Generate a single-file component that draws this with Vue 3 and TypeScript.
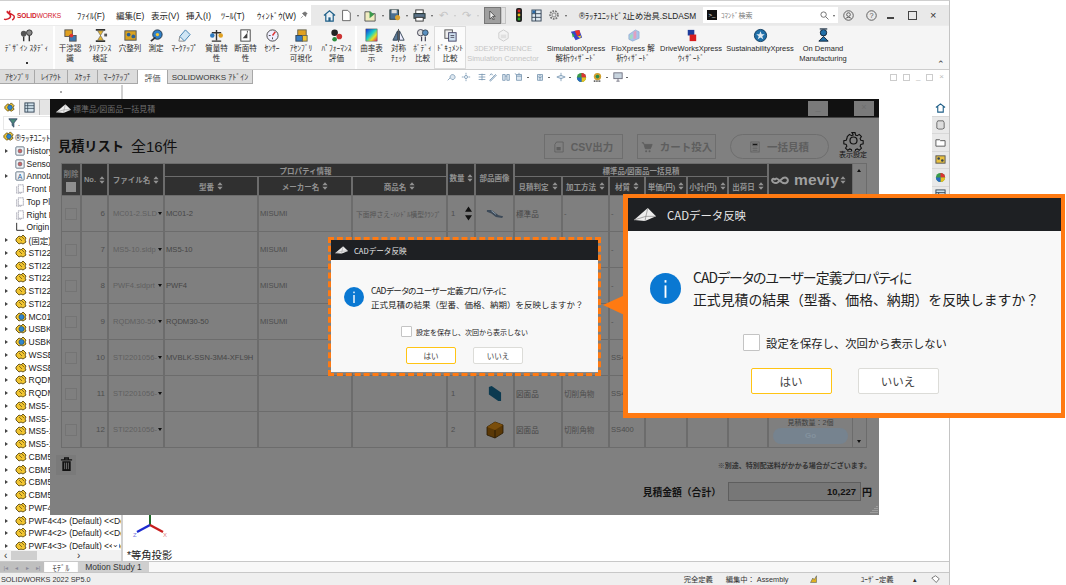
<script setup lang="ts">
interface RibbonItem { w: number; l: string[]; i: string; dim?: boolean; boxed?: boolean; sep?: boolean }

const ico: Record<string, string> = {
  study: '<circle cx="5" cy="6" r="3" fill="#555"/><circle cx="11" cy="5" r="3" fill="#888" stroke="#333"/><path d="M5 9v5M11 8v6" stroke="#333" stroke-width="1.5"/>',
  inter: '<rect x="2" y="2" width="8" height="7" fill="#e0a020" stroke="#555"/><rect x="7" y="8" width="7" height="6" fill="#3c78b4" stroke="#555"/><circle cx="9" cy="8" r="2" fill="#d33"/>',
  clear: '<path d="M3 2h10M3 14h10" stroke="#333" stroke-width="2"/><path d="M5 3h6L8 8l3 5H5l3-5z" fill="#e8b830" stroke="#555" stroke-width=".6"/><rect x="12" y="6" width="3" height="3" fill="#555"/>',
  hole: '<rect x="2" y="3" width="12" height="10" fill="#d9a21e" stroke="#555"/><circle cx="6" cy="7" r="2" fill="#2b5f96"/><circle cx="11" cy="9" r="2" fill="#2b5f96"/>',
  meas: '<circle cx="9" cy="7" r="5" fill="#2f80c8" stroke="#234"/><circle cx="9" cy="7" r="1.8" fill="#f2c531"/><path d="M2 14l5-4" stroke="#333" stroke-width="2"/>',
  mark: '<path d="M3 9l6-7 5 5-6 7z" fill="#cfe6f5" stroke="#3d7fb0"/><path d="M3 9l-1 5 6 0" fill="none" stroke="#888"/>',
  mass: '<path d="M8 2v11M3 14h10M3 5h10" stroke="#333" stroke-width="1.5"/><circle cx="3.5" cy="8" r="2.4" fill="#2d7ac0"/><circle cx="12.5" cy="8" r="2.4" fill="#e0a020"/>',
  sect: '<rect x="3" y="2" width="10" height="12" fill="#fff" stroke="#444"/><path d="M5 11l5-6v6z" fill="#444"/><path d="M10 5v-2" stroke="#444"/>',
  sens: '<circle cx="8" cy="8" r="6" fill="#eef" stroke="#444"/><path d="M8 8l3-4" stroke="#d33" stroke-width="1.5"/><path d="M4 8h2M8 12v-2" stroke="#444"/>',
  asmv: '<rect x="4" y="2" width="9" height="7" fill="#e0a020" stroke="#665"/><rect x="2" y="8" width="7" height="6" fill="#3a7cc0" stroke="#345"/><rect x="9" y="8" width="5" height="6" fill="#f2c531" stroke="#665"/>',
  perf: '<circle cx="6" cy="5" r="3.5" fill="#222"/><circle cx="11" cy="9" r="3" fill="#c33"/><circle cx="6" cy="12" r="2.5" fill="#2a8a3c"/>',
  curv: '<defs><linearGradient id="cg" x1="0" y1="0" x2="1" y2="1"><stop offset="0" stop-color="#1c2be0"/><stop offset=".45" stop-color="#18d0c8"/><stop offset=".7" stop-color="#e8e020"/><stop offset="1" stop-color="#e01c70"/></linearGradient></defs><rect x="2" y="1" width="12" height="13" fill="url(#cg)" stroke="#444" stroke-width=".5"/>',
  symm: '<path d="M8 1v14" stroke="#555"/><path d="M7 3L2 13h5z" fill="#5a7a98" stroke="#345"/><path d="M9 3l5 10H9z" fill="#eef" stroke="#345"/>',
  body: '<circle cx="6" cy="5" r="3.4" fill="#ddd" stroke="#445"/><circle cx="11" cy="5" r="3" fill="#5a90c0" stroke="#345"/><path d="M7 9v5M11 9v5" stroke="#445" stroke-width="1.3"/>',
  doc: '<rect x="2" y="2" width="8" height="9" fill="#eee" stroke="#555"/><rect x="6" y="5" width="8" height="9" fill="#cfe0ef" stroke="#446"/><path d="M8 8h4M8 10h4" stroke="#556"/>',
  exp: '<path d="M3 5l5-3 5 3v6l-5 3-5-3z" fill="#f3f3f3" stroke="#ccc"/><path d="M5 7h6v4H5z" fill="#e0e0e0"/>',
  simx: '<path d="M2 4l5 9 7-3-3-8z" fill="#3a44c8"/><path d="M6 3l3 6 3-3-1-4z" fill="#e8302c"/><path d="M3 5l3 3-2 2z" fill="#28b048"/><path d="M9 9l4-1-1 3z" fill="#f0d020"/>',
  flo: '<path d="M3 7l7-5 4 2v7l-7 3-4-2z" fill="#a8c4ea" stroke="#7a98c0" stroke-width=".5"/><path d="M8 4l3-1v8l-3 1z" fill="#e0a0c0"/><path d="M4 8l3-2v5l-3 1z" fill="#a0dcc0"/>',
  drive: '<rect x="4" y="2" width="7" height="6" fill="#1e3e9c"/><rect x="6" y="7" width="7" height="7" fill="#d81e1e"/>',
  sus: '<circle cx="8" cy="8" r="6.5" fill="#1f6fa8" stroke="#103c60"/><path d="M8 3.5l1.3 3.2h3.2L9.9 8.8l1 3.2L8 10.2 5.1 12l1-3.2L3.5 6.7h3.2z" fill="#dfeaf2"/>',
  ond: '<circle cx="8" cy="5" r="3.4" fill="#1f6fa8" stroke="#123"/><path d="M3 14l5-5 5 5z" fill="#1f6fa8" stroke="#123"/><path d="M4 1h8" stroke="#456" stroke-width="1.6"/>'
}

const ribbon: RibbonItem[] = [
  { w: 55, l: ['ﾃﾞｻﾞｲﾝ ｽﾀﾃﾞｨ'], i: 'study', sep: true },
  { w: 30, l: ['干渉認', '識'], i: 'inter' },
  { w: 30, l: ['ｸﾘｱﾗﾝｽ', '検証'], i: 'clear' },
  { w: 30, l: ['穴整列'], i: 'hole' },
  { w: 22, l: ['測定'], i: 'meas' },
  { w: 35, l: ['ﾏｰｸｱｯﾌﾟ'], i: 'mark' },
  { w: 29, l: ['質量特', '性'], i: 'mass' },
  { w: 29, l: ['断面特', '性'], i: 'sect' },
  { w: 24, l: ['ｾﾝｻｰ'], i: 'sens' },
  { w: 34, l: ['ｱｾﾝﾌﾞﾘ', '可視化'], i: 'asmv' },
  { w: 39, l: ['ﾊﾟﾌｫｰﾏﾝｽ', '評価'], i: 'perf', sep: true },
  { w: 29, l: ['曲率表', '示'], i: 'curv' },
  { w: 25, l: ['対称', 'ﾁｪｯｸ'], i: 'symm' },
  { w: 23, l: ['ﾎﾞﾃﾞｨ', '比較'], i: 'body' },
  { w: 32, l: ['ﾄﾞｷｭﾒﾝﾄ', '比較'], i: 'doc', boxed: true },
  { w: 74, l: ['3DEXPERIENCE', 'Simulation Connector'], i: 'exp', dim: true },
  { w: 72, l: ['SimulationXpress', '解析ｳｨｻﾞｰﾄﾞ'], i: 'simx' },
  { w: 42, l: ['FloXpress 解', '析ｳｨｻﾞｰﾄﾞ'], i: 'flo' },
  { w: 74, l: ['DriveWorksXpress', 'ｳｨｻﾞｰﾄﾞ'], i: 'drive' },
  { w: 64, l: ['SustainabilityXpress'], i: 'sus' },
  { w: 62, l: ['On Demand', 'Manufacturing'], i: 'ond' }
]

const menus = ['ﾌｧｲﾙ(F)', '編集(E)', '表示(V)', '挿入(I)', 'ﾂｰﾙ(T)', 'ｳｨﾝﾄﾞｳ(W)']
const cmdTabs = [
  { t: 'ｱｾﾝﾌﾞﾘ', w: 35 }, { t: 'ﾚｲｱｳﾄ', w: 33 }, { t: 'ｽｹｯﾁ', w: 30 }, { t: 'ﾏｰｸｱｯﾌﾟ', w: 40 },
  { t: '評価', w: 30, on: true }, { t: 'SOLIDWORKS ｱﾄﾞｲﾝ', w: 85 }
]

const tree: { t: string; k: string; arrow?: boolean }[] = [
  { t: 'History', k: 'hist', arrow: true }, { t: 'Sensors', k: 'sens', }, { t: 'Annotations', k: 'ann', arrow: true },
  { t: 'Front Plane', k: 'plane' }, { t: 'Top Plane', k: 'plane' }, { t: 'Right Plane', k: 'plane' }, { t: 'Origin', k: 'orig' },
  { t: '(固定) STI', k: 'y', arrow: true },
  ...['STI2201056', 'STI2201056', 'STI2201056', 'STI2201056', 'STI2201056'].map(t => ({ t, k: 'y', arrow: true })),
  { t: 'MC01-2<1>', k: 'b', arrow: true }, { t: 'USBKS<1>', k: 'b', arrow: true }, { t: 'USBKS<2>', k: 'b', arrow: true },
  ...['WSSB-1', 'WSSB-2', 'RQDM30', 'RQDM30', 'MS5-10', 'MS5-10', 'MS5-10', 'MS5-10', 'CBM5-1', 'CBM5-2', 'CBM5-3', 'CBM5-4', 'PWF4<1>']
    .map(t => ({ t, k: 'y', arrow: true })),
  { t: 'PWF4<4> (Default) <<Default', k: 'y', arrow: true },
  { t: 'PWF4<2> (Default) <<Default', k: 'y', arrow: true },
  { t: 'PWF4<3> (Default) <<Default', k: 'y', arrow: true }
]

/* heads-up view toolbar: small grey-blue line glyphs, with gaps taken from the reference */
const viewIcons: { d: string; gap: number; dot?: boolean }[] = [
  { d: 'M2 10l3-3M5 7a3 3 0 1 1 2 2z', gap: 0 },
  { d: 'M6 1v2M6 9v2M1 6h2M9 6h2M6 4a2 2 0 1 0 .01 0z', gap: 5 },
  { d: 'M2 3h8M2 6h8M2 9h8M6 2v8', gap: 6 },
  { d: 'M2 10l7-7 1 1-7 7zM2 4l2-2 2 2', gap: 1 },
  { d: 'M2 3h3v7H2zM7 3h3v7H7zM5 5h2', gap: 3 },
  { d: 'M3 3h6v7H3zM3 5l6 0M1 2l2 1M6 3V1', gap: 3, dot: true },
  { d: 'M3 3h6v7H3zM6 3v7M3 5l3 2 3-2', gap: 6, dot: true },
  { d: 'M1 6l5-2 5 2-5 2zM6 4V1M6 8v3', gap: 6, dot: true }
]

interface Row { no: number; file: string; part: string; maker: string; name: string; qty: string; pic: string; kind: string; method: string; mat: string }
const rows: Row[] = [
  { no: 6, file: 'MC01-2.SLD', part: 'MC01-2', maker: 'MISUMI', name: '下面押さえ･ﾊﾝﾄﾞﾙ横型ｸﾗﾝﾌﾟ', qty: '1', pic: 'clamp', kind: '標準品', method: '-', mat: '-' },
  { no: 7, file: 'MS5-10.sldp', part: 'MS5-10', maker: 'MISUMI', name: '', qty: '', pic: '', kind: '', method: '-', mat: '-' },
  { no: 8, file: 'PWF4.sldprt', part: 'PWF4', maker: 'MISUMI', name: '', qty: '', pic: '', kind: '', method: '-', mat: '-' },
  { no: 9, file: 'RQDM30-50', part: 'RQDM30-50', maker: 'MISUMI', name: '', qty: '', pic: '', kind: '', method: '-', mat: '-' },
  { no: 10, file: 'STI2201056-', part: 'MVBLK-SSN-3M4-XFL9H', maker: '', name: '', qty: '', pic: '', kind: '', method: '', mat: 'SS400' },
  { no: 11, file: 'STI2201056-', part: '', maker: '', name: '', qty: '1', pic: 'plate', kind: '図面品', method: '切削角物', mat: 'SS400' },
  { no: 12, file: 'STI2201056-', part: '', maker: '', name: '', qty: '2', pic: 'block', kind: '図面品', method: '切削角物', mat: 'SS400' }
]
</script>

<template>
  <div class="screen">
    <svg class="defs" width="0" height="0" aria-hidden="true">
      <defs>
        <symbol id="asm-y" viewBox="0 0 12 12">
          <path d="M1 5l3-3 2 1 2-2 3 3-1 2 1 2-3 2-2-1-2 1-3-3z" fill="#f2c531" stroke="#5c4a10" stroke-width=".9"/>
          <path d="M4 4l3 3M7 3l2 2" stroke="#5c4a10" stroke-width=".7"/>
        </symbol>
        <symbol id="asm-b" viewBox="0 0 12 12">
          <path d="M1 5l3-3 2 1 2-2 3 3-1 2 1 2-3 2-2-1-2 1-3-3z" fill="#f2c531" stroke="#5c4a10" stroke-width=".9"/>
          <circle cx="6.5" cy="6" r="2.6" fill="#2f86cf" stroke="#17456e" stroke-width=".6"/>
        </symbol>
        <symbol id="updown" viewBox="0 0 8 10">
          <path d="M4 0l3.5 4h-7zM4 10L.5 6h7z" fill="currentColor"/>
        </symbol>
        <symbol id="mlogo" viewBox="0 0 24 14">
          <path d="M0 13L15 0l9 9-12 5z" fill="#ececec"/>
          <path d="M0 13l13-4 11 0M15 0l-2 9-1 5" fill="none" stroke="#8a8a8a" stroke-width=".8"/>
        </symbol>
      </defs>
    </svg>

    <div class="app">
      <header class="titlebar">
        <div class="brand">
          <svg class="ds" viewBox="0 0 14 12" width="13" height="11"><path d="M1 10C4 11 9 9 8 6S3 3 5 1M8 1C5 2 7 4 10 5s3 4 0 6" fill="none" stroke="#d3202a" stroke-width="1.6"/></svg>
          <span class="brand-text"><b>SOLID</b>WORKS</span>
        </div>
        <nav class="menus"><span v-for="m in menus" :key="m">{{ m }}</span></nav>
        <svg class="pin" viewBox="0 0 10 10" width="8" height="8"><path d="M1 9l3-3M3 3l4 4 1-3 1-1-3-2-1 1z" fill="#777" stroke="#555" stroke-width=".6"/></svg>
        <div class="qat">
          <svg class="qi home" viewBox="0 0 14 14" width="13" height="13"><path d="M1 7l6-5 6 5M3 6v7h8V6" fill="#e9f2f8" stroke="#1f5f88" stroke-width="1.3"/><rect x="5.8" y="9" width="2.4" height="4" fill="#1f5f88"/></svg>
          <svg class="qi" viewBox="0 0 14 14" width="12" height="13"><path d="M3 1h6l3 3v9H3z" fill="#fff" stroke="#555"/></svg>
          <i class="dd"></i>
          <svg class="qi" viewBox="0 0 14 14" width="13" height="13"><path d="M1 3h5l1 2h5v8H1z" fill="#f0ecc0" stroke="#555"/><path d="M6 2l5 4-5 4z" fill="#3a9a4c"/></svg>
          <i class="dd"></i>
          <svg class="qi" viewBox="0 0 14 14" width="12" height="12"><rect x="1" y="1" width="10" height="11" fill="#4a6f92" stroke="#233"/><rect x="3" y="1" width="6" height="4" fill="#ddd"/><circle cx="10" cy="10" r="3" fill="#d9a030"/></svg>
          <i class="dd"></i>
          <svg class="qi" viewBox="0 0 14 14" width="13" height="13"><rect x="3" y="1" width="8" height="4" fill="#fff" stroke="#333"/><rect x="1" y="5" width="12" height="5" fill="#5a7288" stroke="#233"/><rect x="3" y="9" width="8" height="4" fill="#fff" stroke="#333"/></svg>
          <i class="dd"></i>
          <span class="gh">↶</span><i class="dd faint"></i><span class="gh">↷</span><i class="dd faint"></i>
          <span class="cursor"><svg viewBox="0 0 10 12" width="9" height="11"><path d="M2 1v9l2-2 2 3 1-1-2-3h3z" fill="#eee" stroke="#333" stroke-width=".8"/></svg></span>
          <span class="cursor-dd"></span>
          <svg class="qi light" viewBox="0 0 6 14" width="6" height="14"><rect width="6" height="14" rx="2" fill="#222"/><circle cx="3" cy="3" r="1.4" fill="#d22"/><circle cx="3" cy="7" r="1.4" fill="#e8c020"/><circle cx="3" cy="11" r="1.4" fill="#2a2"/></svg>
          <svg class="qi" viewBox="0 0 12 14" width="11" height="13"><rect x="1" y="1" width="10" height="12" fill="#dfe8f0" stroke="#345"/><path d="M1 5h10M1 9h10M5 1v12" stroke="#345"/><rect x="1.5" y="1.5" width="3" height="3" fill="#2a6aa8"/></svg>
          <svg class="qi gear" viewBox="0 0 14 14" width="12" height="12"><circle cx="7" cy="7" r="4.6" fill="none" stroke="#777" stroke-width="2" stroke-dasharray="2 1.2"/><circle cx="7" cy="7" r="2.4" fill="none" stroke="#777"/></svg>
          <i class="dd"></i>
        </div>
        <div class="docname">®ﾗｯﾁﾕﾆｯﾄﾋﾞｽ止め治具.SLDASM</div>
        <div class="search">
          <span class="prompt">&gt;_</span><span class="ph">ｺﾏﾝﾄﾞ検索</span>
          <svg class="lens" viewBox="0 0 10 10" width="9" height="9"><circle cx="4" cy="4" r="3" fill="none" stroke="#666"/><path d="M6.3 6.3L9.5 9.5" stroke="#666"/></svg>
          <i class="dd"></i>
        </div>
        <div class="winbtns">
          <svg viewBox="0 0 12 12" width="11" height="11"><circle cx="6" cy="6" r="5.2" fill="none" stroke="#555"/><circle cx="6" cy="5" r="2" fill="none" stroke="#555"/><path d="M2.8 9.5c1.5-2 5-2 6.4 0" fill="none" stroke="#555"/></svg>
          <svg viewBox="0 0 12 12" width="11" height="11"><circle cx="6" cy="6" r="5.2" fill="none" stroke="#555"/><text x="6" y="8.8" font-size="8" text-anchor="middle" fill="#555" font-family="Liberation Sans">?</text></svg>
          <span class="wmin"></span>
          <span class="wmax"></span>
          <span class="wclose">×</span>
        </div>
      </header>

      <section class="ribbon">
        <div
          v-for="(r, i) in ribbon" :key="i" class="rb"
          :class="{ dim: r.dim, boxed: r.boxed, sep: r.sep }" :style="{ width: r.w + 'px' }"
        >
          <svg viewBox="0 0 16 16" width="15" height="15"><g v-html="ico[r.i]"></g></svg>
          <span v-for="(t, j) in r.l" :key="j" class="rbt">{{ t }}</span>
          <span v-if="i === 0" class="rbdot"></span>
        </div>
        <span class="collapse">⌃</span>
      </section>

      <div class="cmdtabs">
        <span v-for="t in cmdTabs" :key="t.t" class="ct" :class="{ on: t.on }" :style="{ width: t.w + 'px' }">{{ t.t }}</span>
        <div class="viewbar">
          <template v-for="(v, i) in viewIcons" :key="i">
            <svg viewBox="0 0 12 12" width="10" height="10" :style="{ marginLeft: v.gap + 'px' }"><path :d="v.d" fill="#dde7f0" stroke="#6f90ac" stroke-width=".9"/></svg>
            <i v-if="v.dot" class="vdot"></i>
          </template>
          <svg class="vm" viewBox="0 0 12 12" width="11" height="11"><circle cx="6" cy="6" r="5" fill="#3a9a4a"/><path d="M6 1a5 5 0 0 1 5 5H6z" fill="#d33"/><path d="M6 6h5a5 5 0 0 1-5 5z" fill="#e8c020"/><path d="M6 6v5a5 5 0 0 1-5-5z" fill="#2a6ac0"/></svg>
          <svg class="vm" viewBox="0 0 12 12" width="11" height="11"><circle cx="6" cy="5" r="4" fill="#d0a030"/><circle cx="6" cy="5" r="2" fill="#2a8a4a"/><path d="M2 10h8" stroke="#333" stroke-width="2" stroke-dasharray="1 1"/></svg>
          <i class="vdot"></i>
          <svg class="vm" viewBox="0 0 12 12" width="10" height="10"><rect x="1" y="1" width="10" height="7" fill="#c8d4de" stroke="#667"/><path d="M4 11h4M6 8v3" stroke="#667"/></svg>
          <i class="vdot"></i>
        </div>
        <div class="vctl"><i></i><i></i><b>_</b><i></i><b>×</b></div>
      </div>

      <main class="main">
        <aside class="tree">
          <div class="tree-top"><span class="tdot"></span></div>
          <div class="tree-tabs">
            <span class="tt on"><svg viewBox="0 0 12 12" width="11" height="11"><use href="#asm-b"/></svg></span>
            <span class="tt"><svg viewBox="0 0 12 12" width="11" height="11"><rect x="1" y="1" width="10" height="10" fill="#cfe0ea" stroke="#345"/><path d="M1 4h10M1 7h10M4 1v10" stroke="#345" stroke-width=".8"/></svg></span>
          </div>
          <div class="filter"><svg viewBox="0 0 12 12" width="10" height="10"><path d="M1 1h10L7 6v5L5 9V6z" fill="#4a8a7a" stroke="#346"/></svg><i>.</i></div>
          <div class="troot"><svg viewBox="0 0 12 12" width="11" height="11"><use href="#asm-b"/></svg><span>®ﾗｯﾁﾕﾆｯﾄﾋﾞｽ止め治具</span></div>
          <ul class="tlist">
            <li v-for="(n, i) in tree" :key="i">
              <span class="arrow" :class="{ off: !n.arrow }"></span>
              <svg v-if="n.k === 'y'" viewBox="0 0 12 12" width="12" height="12"><use href="#asm-y"/></svg>
              <svg v-else-if="n.k === 'b'" viewBox="0 0 12 12" width="12" height="12"><use href="#asm-b"/></svg>
              <svg v-else-if="n.k === 'orig'" viewBox="0 0 12 12" width="10" height="10"><path d="M2 1v9h9" fill="none" stroke="#222" stroke-width="1.1"/></svg>
              <svg v-else-if="n.k === 'plane'" viewBox="0 0 12 12" width="10" height="10"><path d="M4 1h6v9H4z M2 3v8h6" fill="#fff" stroke="#889" stroke-dasharray="1.5 .8"/></svg>
              <svg v-else viewBox="0 0 12 12" width="10" height="10"><rect x="1" y="1" width="10" height="10" rx="1" fill="#f0f4f8" stroke="#567"/><circle v-if="n.k !== 'ann'" cx="6" cy="6" r="2.4" fill="#c66" stroke="#345" stroke-width=".5"/><text v-else x="6" y="9" font-size="8" text-anchor="middle" fill="#2a5a8a" font-family="Liberation Sans">A</text></svg>
              <span class="tl">{{ n.t }}</span>
            </li>
          </ul>
          <span class="tmore">⌄</span>
          <div class="hscroll"><span class="lt">‹</span><span class="thumb"></span><span class="rt">›</span></div>
        </aside>

        <section class="view">
          <div class="canvas-bottom">
            <svg class="triad" viewBox="0 0 40 30" width="40" height="30">
              <path d="M20 0v15" stroke="#1f6b2a" stroke-width="2"/>
              <path d="M20 15L7 22" stroke="#1c2bd0" stroke-width="2.4"/>
              <path d="M20 15l13 7" stroke="#c81e1e" stroke-width="2.4"/>
              <text x="3" y="27" font-size="6" fill="#7a7ae0" font-family="Liberation Sans">Z</text>
              <text x="33" y="27" font-size="6" fill="#e08080" font-family="Liberation Sans">X</text>
            </svg>
            <span class="iso">*等角投影</span>
          </div>

          <aside class="taskpane">
            <span class="tp on"><svg viewBox="0 0 12 12" width="11" height="11"><path d="M1 6l5-4 5 4M3 5v6h6V5" fill="#fff" stroke="#1f5f88" stroke-width="1.2"/></svg></span>
            <span class="tp"><svg viewBox="0 0 12 12" width="11" height="11"><path d="M3 2l6 0 1 2v6l-2 1H4L2 10V4z" fill="#ddd" stroke="#666"/></svg></span>
            <span class="tp"><svg viewBox="0 0 12 12" width="11" height="11"><path d="M1 3h4l1 1h5v6H1z" fill="#fff" stroke="#555"/></svg></span>
            <span class="tp"><svg viewBox="0 0 12 12" width="11" height="11"><rect x="1" y="2" width="10" height="8" fill="#e8c040" stroke="#555"/><circle cx="4" cy="5" r="1.4" fill="#345"/><circle cx="8" cy="7" r="1.4" fill="#345"/></svg></span>
            <span class="tp"><svg viewBox="0 0 12 12" width="11" height="11"><circle cx="6" cy="6" r="5" fill="#3a9a4a"/><path d="M6 1a5 5 0 0 1 5 5H6z" fill="#d33"/><path d="M6 6h5a5 5 0 0 1-5 5z" fill="#e8c020"/><path d="M6 6v5a5 5 0 0 1-5-5z" fill="#2a6ac0"/></svg></span>
            <span class="tp"><svg viewBox="0 0 12 12" width="11" height="11"><rect x="1" y="1" width="10" height="10" fill="#cfe0ea" stroke="#345"/><path d="M1 4h10M4 4v7" stroke="#345"/></svg></span>
          </aside>
        </section>
      </main>

      <div class="modeltabs">
        <span class="nav"><i>|◂</i><i>◂</i><i>▸</i><i>▸|</i></span>
        <span class="mt on">ﾓﾃﾞﾙ</span>
        <span class="mt">Motion Study 1</span>
      </div>
      <footer class="status">
        <span>SOLIDWORKS 2022 SP5.0</span>
        <span class="st-r">
          <span class="s1">完全定義</span>
          <span class="s2">編集中： Assembly</span>
          <svg class="s3" viewBox="0 0 12 12" width="9" height="9"><path d="M2 10l3-6 2 2 3-5v9z" fill="#e0b020" stroke="#345" stroke-width=".6"/></svg>
          <span class="s4">ﾕｰｻﾞｰ定義</span>
          <span class="s5">▴</span>
          <svg class="s6" viewBox="0 0 12 12" width="9" height="9"><path d="M1 4l5-3 5 4-4 5z" fill="#fff" stroke="#555"/></svg>
        </span>
      </footer>
    </div>

    <!-- floating quotation window over the CAD viewport -->
    <div class="qw">
      <div class="qw-title">
        <svg viewBox="0 0 24 14" width="15" height="9"><use href="#mlogo"/></svg>
        <span>標準品/図面品一括見積</span>
        <i class="qbtn q1">_</i>
        <i class="qbtn q2">×</i>
      </div>
      <div class="qw-body">
        <div class="toprow">
          <h1><b>見積リスト</b><span>全16件</span></h1>
          <div class="actions">
            <button class="ab a1"><svg viewBox="0 0 12 14" width="10" height="12"><path d="M3 1h8v12H1V4z" fill="none" stroke="#5e5e5e"/><rect x="3" y="7" width="5" height="4" fill="#5e5e5e"/></svg>CSV出力</button>
            <button class="ab a2"><svg viewBox="0 0 14 14" width="12" height="12"><path d="M1 2h2l2 7h6l2-5H4" fill="#5e5e5e" stroke="#5e5e5e"/><circle cx="6" cy="12" r="1.2" fill="#5e5e5e"/><circle cx="10" cy="12" r="1.2" fill="#5e5e5e"/></svg>カート投入</button>
            <button class="ab a3"><svg viewBox="0 0 12 14" width="10" height="12"><rect x="1" y="1" width="10" height="12" fill="none" stroke="#5e5e5e"/><path d="M3 3h6v2H3zM3 7h6M3 9h6M3 11h6" stroke="#5e5e5e"/></svg>一括見積</button>
            <div class="cfg">
              <svg viewBox="0 0 24 24" width="21" height="21"><path d="M10 2h4l.6 3 2.2.9 2.5-1.7 2.8 2.8-1.7 2.5.9 2.2 3 .6v4l-3 .6-.9 2.2 1.7 2.5-2.8 2.8-2.5-1.7-2.2.9-.6 3h-4l-.6-3-2.2-.9-2.5 1.7-2.8-2.8 1.7-2.5-.9-2.2-3-.6v-4l3-.6.9-2.2L4.1 7l2.8-2.8 2.5 1.7 2.2-.9z" transform="translate(1.2 1.2) scale(.9)" fill="none" stroke="#111" stroke-width="1.4"/><circle cx="12" cy="12" r="4" fill="none" stroke="#111" stroke-width="1.4"/></svg>
              <span>表示設定</span>
            </div>
          </div>
        </div>

        <div class="tablewrap">
          <div class="grid">
            <div class="h c-del"><span>削除</span><i class="hbox"></i></div>
            <div class="h c-no">No.<svg class="ud" width="6" height="8"><use href="#updown"/></svg></div>
            <div class="h c-file">ファイル名<svg class="ud" width="6" height="8"><use href="#updown"/></svg></div>
            <div class="h g1">プロパティ情報</div>
            <div class="h c-qty">数量<svg class="ud" width="6" height="8"><use href="#updown"/></svg></div>
            <div class="h c-img">部品画像</div>
            <div class="h g2">標準品/図面品一括見積</div>
            <div class="h c-mev"><svg viewBox="0 0 24 12" width="24" height="12"><path d="M6 6c2-5 6 5 11 3 4-2 1-7-3-5-4 3-6 7-10 4-2-2 0-5 2-2" fill="none" stroke="#9a9a9a" stroke-width="2"/></svg><b>meviy</b><svg class="ud" width="6" height="8"><use href="#updown"/></svg></div>
            <div class="h s" v-for="c in ['型番','メーカー名','商品名']" :key="c">{{ c }}<svg class="ud" width="6" height="8"><use href="#updown"/></svg></div>
            <div class="h s" v-for="c in ['見積判定','加工方法','材質','単価(円)','小計(円)','出荷日']" :key="c">{{ c }}<svg class="ud" width="6" height="8"><use href="#updown"/></svg></div>

            <template v-for="r in rows" :key="r.no">
              <div class="d ctr"><i class="chk"></i></div>
              <div class="d num">{{ r.no }}</div>
              <div class="d filec"><span>{{ r.file }}</span><i class="tri"></i></div>
              <div class="d dark">{{ r.part }}</div>
              <div class="d">{{ r.maker }}</div>
              <div class="d pname">{{ r.name }}</div>
              <div class="d qty"><span>{{ r.qty }}</span><svg v-if="r.no === 6" class="stepper" viewBox="0 0 8 16" width="7" height="15"><path d="M4 0l4 6H0zM4 16L0 10h8z" fill="#111"/></svg></div>
              <div class="d ctr">
                <svg v-if="r.pic === 'clamp'" viewBox="0 0 20 12" width="18" height="11"><path d="M1 2l5 0 8 6 5 1-1 2-7-1-5-4-5-2z" fill="#3d4a58"/><path d="M6 3l5 4" stroke="#8fa0b0"/></svg>
                <svg v-if="r.pic === 'plate'" viewBox="0 0 16 18" width="15" height="17"><path d="M2 2l3-1 10 7v9l-3 0L2 10z" fill="#0c3a50"/></svg>
                <svg v-if="r.pic === 'block'" viewBox="0 0 18 18" width="18" height="18"><path d="M1 6l8-5 8 3v8l-8 5-8-3z" fill="#5a3806" stroke="#2a1a02" stroke-width=".8"/><path d="M1 6l8 3 8-5-8-3z" fill="#7a4e0c"/><path d="M9 9v8" stroke="#2a1a02"/></svg>
              </div>
              <div class="d dark">{{ r.kind }}</div>
              <div class="d">{{ r.method }}</div>
              <div class="d">{{ r.mat }}</div>
              <div class="d"></div>
              <div class="d"></div>
              <div class="d"></div>
              <div class="d go" :class="{ has: r.no === 12 }">
                <template v-if="r.no === 12"><span>見積数量：2個</span><em>Go</em></template>
              </div>
            </template>
          </div>
          <div class="vbar"><i class="up"></i><i class="dn"></i></div>
        </div>

        <div class="lower">
          <button class="trash"><svg viewBox="0 0 14 16" width="13" height="15"><path d="M1 3h12M5 3V1h4v2" fill="none" stroke="#111" stroke-width="1.4"/><path d="M2.5 4.5h9V15h-9z" fill="#111"/><path d="M5 6v7M7 6v7M9 6v7" stroke="#7a7a7a" stroke-width=".9"/></svg></button>
          <span class="note">※別途、特別配送料がかかる場合がございます。</span>
        </div>
        <div class="total">
          <span class="tlabel">見積金額（合計）</span>
          <span class="tval">10,227</span>
          <span class="yen">円</span>
        </div>
        <svg class="grip" viewBox="0 0 8 8" width="8" height="8"><path d="M7 1v1M5 3v1M7 3v1M3 5v1M5 5v1M7 5v1M1 7v1M3 7v1M5 7v1M7 7v1" stroke="#b8b8b8"/></svg>
      </div>
    </div>

    <!-- dashed highlight round the small dialog -->
    <div class="hl">
      <div class="dlg small">
        <div class="dlg-t"><svg viewBox="0 0 24 14" width="13" height="8"><use href="#mlogo"/></svg><span>CADデータ反映</span></div>
        <div class="dlg-b">
          <div class="msg">
            <svg viewBox="0 0 20 20"><circle cx="10" cy="10" r="10" fill="#0a78d2"/><rect x="9.3" y="8" width="1.4" height="8" fill="#fff"/><rect x="9.3" y="4.6" width="1.4" height="1.6" fill="#fff"/></svg>
            <p><span class="palt">CADデータのユーザー定義プロパティに</span><br>正式見積の結果（型番、価格、納期）を反映しますか？</p>
          </div>
          <label class="remember"><i></i><span>設定を保存し、次回から表示しない</span></label>
          <div class="btns"><button class="yes">はい</button><button class="no">いいえ</button></div>
        </div>
      </div>
    </div>

    <!-- enlarged callout -->
    <svg class="pointer" viewBox="0 0 24 24" width="24" height="22"><path d="M0 11L24 0v22z" fill="#ff7a12"/></svg>
    <div class="dlg big">
      <div class="dlg-t"><svg viewBox="0 0 24 14" width="22" height="13"><use href="#mlogo"/></svg><span>CADデータ反映</span></div>
      <div class="dlg-b">
        <div class="msg">
          <svg viewBox="0 0 20 20"><circle cx="10" cy="10" r="10" fill="#0a78d2"/><rect x="9.4" y="8" width="1.2" height="8" fill="#fff"/><rect x="9.4" y="4.6" width="1.2" height="1.6" fill="#fff"/></svg>
          <p><span class="palt">CADデータのユーザー定義プロパティに</span><br>正式見積の結果（型番、価格、納期）を反映しますか？</p>
        </div>
        <label class="remember"><i></i><span>設定を保存し、次回から表示しない</span></label>
        <div class="btns"><button class="yes">はい</button><button class="no">いいえ</button></div>
      </div>
    </div>
  </div>
</template>

<style>
html, body { margin: 0; background: #fff; }
</style>

<style scoped>
.screen {
  position: relative; width: 1066px; height: 585px; overflow: hidden; background: #fff;
  font-family: "Liberation Sans", "Noto Sans CJK JP", sans-serif; color: #222;
}
.defs { position: absolute; }
i { font-style: normal; }
button { font-family: inherit; }

.app {
  width: 950px; height: 585px; box-sizing: border-box; display: flex; flex-direction: column;
  border-right: 1px solid #c4c4c4; border-top: 1px solid #cfcfcf; padding-top: 4px; overflow: hidden;
}
.titlebar { height: 20px; display: flex; align-items: center; background: linear-gradient(90deg, #fff 311px, #e9e9e9 311px); flex: none; }
.brand { width: 77px; display: flex; align-items: center; padding-left: 3px; box-sizing: border-box; gap: 1px; flex: none; }
.brand-text { font-size: 6.6px; color: #d3202a; letter-spacing: -.1px; }
.brand-text b { font-weight: 700; }
.menus { display: flex; font-size: 8.5px; width: 220px; flex: none; }
.menus span:nth-child(1) { width: 39px; }
.menus span:nth-child(2), .menus span:nth-child(3), .menus span:nth-child(4) { width: 35px; }
.menus span:nth-child(5) { width: 36px; }
.menus span:nth-child(6) { width: 40px; }
.pin { margin-left: 3px; flex: none; }
.qat { display: flex; align-items: center; margin-left: 15px; height: 20px; width: 256px; flex: none; }
.qi { flex: none; }
.qi.home { margin-right: 4px; }
.dd { display: block; width: 0; height: 0; border: 1.5px solid transparent; border-top: 2px solid #555; margin: 2px 5px 0; flex: none; }
.dd.faint { border-top-color: #c8c8c8; }
.gh { color: #c4c4c4; font-size: 11px; width: 11px; text-align: center; }
.cursor { width: 17px; height: 17px; background: #9f9f9f; border: 1px solid #777; box-sizing: border-box; display: flex; align-items: center; justify-content: center; margin-left: 0; flex: none; }
.cursor-dd { width: 5px; height: 17px; background: #e3e3e3; border: 1px solid #c4c4c4; box-sizing: border-box; flex: none; margin-right: 10px; }
.light { margin-right: 9px; }
.gear { margin-left: 6px; }
.docname { font-size: 8.3px; width: 124px; flex: none; white-space: nowrap; }
.search { width: 135px; height: 16px; background: #fff; flex: none; display: flex; align-items: center; font-size: 7px; color: #777; box-sizing: border-box; padding-left: 4px; }
.prompt { background: #111; color: #fff; width: 10px; height: 10px; font-size: 6px; line-height: 10px; text-align: center; margin-right: 4px; }
.ph { flex: 1; }
.search .dd { margin: 2px 3px 0 4px; }
.winbtns { display: flex; align-items: center; margin-left: 5px; flex: 1; height: 20px; }
.winbtns svg:nth-child(2) { margin-left: 12px; }
.wmin { width: 7px; height: 1.5px; background: #444; margin: 6px 0 0 10px; }
.wmax { width: 9px; height: 9px; border: 1px solid #444; box-sizing: border-box; margin-left: 14px; }
.wclose { font-size: 11px; color: #333; margin-left: 13px; }

.ribbon { height: 43px; flex: none; display: flex; background: #f5f5f5; border-top: 1px solid #ececec; border-bottom: 1px solid #cdcdcd; position: relative; box-sizing: content-box; }
.rb { display: flex; flex-direction: column; align-items: center; font-size: 7.5px; line-height: 10px; padding-top: 2px; box-sizing: border-box; white-space: nowrap; flex: none; position: relative; color: #2a2a2a; }
.rb svg { margin-bottom: 1px; flex: none; }
.rb.sep { border-right: 2px solid #fff; }
.rb.dim { color: #c6c6c6; }
.rb.boxed { background: #fbfbfb; outline: 1px solid #dcdcdc; outline-offset: -1px; }
.rbt { display: block; }
.rbdot { position: absolute; left: 26px; top: 36px; width: 2px; height: 2px; background: #333; }
.collapse { position: absolute; right: 4px; bottom: 1px; font-size: 9px; color: #333; line-height: 8px; }

.cmdtabs { height: 15px; display: flex; background: #fff; flex: none; align-items: flex-start; }
.ct { height: 14px; font-size: 8px; display: flex; align-items: center; justify-content: center; background: #dcdcdc; border-right: 1px solid #a8a8a8; border-bottom: 1px solid #a8a8a8; box-sizing: border-box; color: #333; white-space: nowrap; flex: none; }
.ct.on { background: #fff; border-bottom: 0; color: #555; }
.viewbar { margin-left: 193px; height: 14px; display: flex; align-items: center; flex: none; }
.vdot { width: 2px; height: 1px; background: #666; margin-left: 3px; display: block; flex: none; }
.vm { margin-left: 5px; flex: none; }
.vctl { margin-left: auto; margin-right: 5px; height: 14px; display: flex; gap: 6px; font-size: 8px; color: #bbb; align-items: center; }
.vctl i { width: 7px; height: 7px; border: 1px solid #ccc; box-sizing: border-box; display: block; }
.vctl b { font-weight: 400; line-height: 8px; }

.main { flex: 1; display: flex; min-height: 0; }
.tree { width: 123px; flex: none; border-right: 2px solid #d0d0d0; box-sizing: border-box; position: relative; overflow: hidden; background: #fff; }
.tree-top { height: 14px; position: relative; border-bottom: 1px solid #d0d0d0; }
.tdot { position: absolute; left: 60px; top: 6px; width: 2px; height: 2px; background: #aaa; }
.tree-tabs { height: 15px; display: flex; background: #e4e4e4; }
.tt { width: 19px; display: flex; align-items: center; justify-content: center; background: #ececec; border-right: 1px solid #bbb; }
.tt.on { background: #fff; }
.filter { height: 14px; display: flex; align-items: center; padding-left: 4px; border: 1px solid #e8e8e8; margin: 1px 1px 0 3px; box-sizing: border-box; }
.filter i { font-size: 7px; line-height: 7px; }
.troot { height: 13px; display: flex; align-items: center; font-size: 8.3px; padding-left: 3px; gap: 1px; white-space: nowrap; margin-bottom: 1.5px; }
.tlist { list-style: none; margin: 0; padding: 0; }
.tlist li { height: 12.75px; display: flex; align-items: center; white-space: nowrap; padding-left: 5px; color: #222; }
.arrow { width: 0; height: 0; border: 2px solid transparent; border-left: 3px solid #444; margin-right: 5px; flex: none; }
.arrow.off { border-left-color: transparent; }
.tlist svg { margin-right: 1.5px; flex: none; }
.tl { font-size: 8.5px; }
.tmore { position: absolute; left: 112px; top: 456px; font-size: 8px; line-height: 8px; background: #fff; color: #333; }
.hscroll { position: absolute; left: 0; right: 0; bottom: 0; height: 11px; background: #f2f2f2; display: flex; align-items: center; font-size: 10px; color: #333; }
.lt { margin-left: 4px; width: 7px; }
.thumb { width: 26px; height: 9px; background: #cfcfcf; }
.rt { margin-left: 40px; }

.view { flex: 1; position: relative; background: #fff; }
.canvas-bottom { position: absolute; left: 4px; bottom: -1px; display: flex; flex-direction: column; align-items: flex-start; }
.triad { margin-left: 3px; }
.iso { font-size: 10.3px; line-height: 12px; color: #222; margin-top: 10px; }
.taskpane { position: absolute; right: 0; top: 14px; width: 17px; display: flex; flex-direction: column; gap: 1px; background: #d8d8d8; }
.tp { height: 16.5px; display: flex; align-items: center; justify-content: center; background: #e9e9e9; }
.tp.on { background: #fff; }

.modeltabs { height: 12px; box-sizing: border-box; flex: none; display: flex; align-items: stretch; font-size: 8.5px; background: #f8f8f8; border-top: 1px solid #c8c8c8; border-bottom: 1px solid #c8c8c8; position: relative; }
.nav { width: 44px; display: flex; background: #bfbfbf; color: #8a8a9a; justify-content: space-around; align-items: center; font-size: 6px; flex: none; }
.mt { display: flex; align-items: center; justify-content: center; background: #cfcfcf; width: 71px; color: #333; margin-left: 1px; white-space: nowrap; }
.mt.on { background: #fff; width: 32px; color: #555; }
.status { height: 12px; flex: none; background: #efefef; font-size: 7.3px; display: flex; align-items: center; padding-left: 1px; white-space: nowrap; position: relative; color: #333; }
.st-r { flex: 1; display: flex; align-items: center; padding-left: 593px; }
.s1 { width: 42px; }
.s2 { width: 83px; }
.s3 { margin-right: 43px; }
.s4 { width: 52px; }
.s5 { width: 18px; }

/* quotation window */
.qw { position: absolute; left: 50px; top: 99px; width: 829px; height: 416px; background: #808080; display: flex; flex-direction: column; color: #3c3c3c; }
.qw-title { height: 19px; background: #111; display: flex; align-items: center; padding-left: 6px; font-size: 8px; color: #6e6e6e; position: relative; flex: none; border-bottom: 1px solid #444; box-sizing: border-box; gap: 2px; }
.qbtn { position: absolute; top: 2px; width: 20px; height: 15px; background: #7a7a7a; color: #6e6e6e; text-align: center; line-height: 13px; font-size: 9px; }
.q1 { left: 758px; }
.q2 { left: 804px; }
.qw-body { flex: 1; padding: 16px 9px 0 11px; position: relative; display: flex; flex-direction: column; }
.toprow { height: 25px; display: flex; align-items: center; justify-content: space-between; margin-left: -3px; margin-right: 2px; }
h1 { margin: 0; font-weight: 400; color: #111; line-height: 20px; display: flex; gap: 7px; align-items: center; position: relative; top: 0; font-size: 15px; }
h1 b { font-weight: 700; font-size: 13.2px; }
.actions { display: flex; align-items: flex-end; height: 25px; gap: 14px; margin-right: 1px; }
.ab { height: 25px; width: 79px; background: transparent; border: 1px solid #6e6e6e; display: flex; align-items: center; justify-content: center; gap: 7px; color: #5e5e5e; font-size: 10.5px; font-weight: 700; padding: 0; }
.a3 { width: 99px; border-radius: 13px; margin-right: -8px; }
.cfg { width: 36px; display: flex; flex-direction: column; align-items: center; font-size: 7px; line-height: 8px; color: #111; margin-right: -4px; }
.tablewrap { display: flex; margin-top: 4px; width: 806px; background: #6c6c6c; padding: 1px; box-sizing: border-box; }
.grid { display: grid; flex: none; grid-template-columns: 18px 25px 54px 92px 92px 93px 26px 37px 46px 45px 34px 40px 39px 38px 83px; grid-template-rows: 12px 18px repeat(7, 35px); column-gap: 2px; row-gap: 1px; background: #6c6c6c; font-size: 7.5px; }
.h { background: #303030; color: #929292; display: flex; align-items: center; justify-content: center; font-weight: 700; white-space: nowrap; gap: 3px; font-size: 7.5px; }
.ud { color: #929292; flex: none; }
.c-del { grid-row: 1 / 3; flex-direction: column; gap: 3px; color: #7a7a7a; background: #3a3a3a; }
.hbox { width: 10px; height: 10px; background: #8f8f8f; display: block; }
.c-no, .c-file, .c-qty, .c-img, .c-mev { grid-row: 1 / 3; }
.c-img { padding-bottom: 4px; box-sizing: border-box; }
.c-qty { gap: 2px; padding-bottom: 4px; box-sizing: border-box; }
.c-mev { grid-column: 15; font-size: 15.5px; gap: 1px; justify-content: flex-start; color: #a0a0a0; }
.c-mev b { font-family: "Liberation Sans", sans-serif; letter-spacing: .2px; }
.g1 { grid-column: 4 / 7; grid-row: 1; }
.g2 { grid-column: 9 / 15; grid-row: 1; }
.h.s { grid-row: 2; }
.d { background: #7f7f7f; display: flex; align-items: center; padding-left: 1px; color: #4e4e4e; overflow: hidden; white-space: nowrap; min-width: 0; font-size: 7.6px; }
.d.dark { color: #464646; }
.d.ctr { justify-content: center; padding: 0; }
.chk { width: 10px; height: 10px; border: 1px solid #747474; display: block; }
.num { justify-content: flex-end; padding-right: 2px; font-size: 8px; }
.filec { padding-left: 4px; color: #606060; position: relative; padding-right: 6px; }
.filec span { overflow: hidden; display: block; }
.tri { position: absolute; right: 1px; top: 16px; width: 0; height: 0; border: 2.5px solid transparent; border-top: 3px solid #111; }
.pname { font-size: 6.8px; padding-left: 3px; color: #555; }
.qty { position: relative; padding-left: 3px; }
.stepper { position: absolute; right: 2px; top: 10px; }
.go { flex-direction: column; padding: 0; justify-content: flex-start; gap: 1px; }
.go span { font-size: 7px; line-height: 9px; margin-top: 6px; color: #3e3e3e; }
.go em { font-style: normal; width: 75px; height: 16px; border-radius: 8px; background: #76838f; color: #84929e; text-align: center; line-height: 16px; font-size: 8px; font-weight: 700; }
.vbar { width: 13px; margin-left: 1px; background: #7f7f7f; position: relative; flex: none; }
.vbar .up, .vbar .dn { position: absolute; left: 4px; width: 0; height: 0; border: 2.5px solid transparent; }
.vbar .up { top: 3px; border-bottom: 3px solid #111; }
.vbar .dn { bottom: 2px; border-top: 3px solid #111; }
.lower { display: flex; justify-content: space-between; align-items: center; margin: 7px 0 0 -5px; height: 19px; }
.trash { width: 20px; height: 20px; background: #7a7a7a; border: 0; display: flex; align-items: center; justify-content: center; padding: 0; }
.note { font-size: 7px; font-weight: 700; color: #333; margin-right: -1px; }
.total { display: flex; align-items: center; justify-content: flex-end; margin-top: 8px; height: 19px; color: #111; margin-right: -2px; }
.tlabel { font-size: 9.8px; font-weight: 700; margin-right: 7px; }
.tval { width: 133px; height: 19px; border: 1px solid #5e5e5e; background: #777; box-sizing: border-box; text-align: right; padding-right: 4px; font-size: 9.5px; font-weight: 700; line-height: 17px; }
.yen { font-size: 10px; margin-left: 1px; font-weight: 700; }
.grip { position: absolute; right: 1px; bottom: 2px; }

/* dialogs */
.hl { position: absolute; left: 328px; top: 237px; width: 273px; height: 139px; box-sizing: border-box; border: 3px dashed #ff7a12; }
.dlg { display: flex; flex-direction: column; background: #f8f8f8; box-sizing: border-box; color: #222; font-family: "Noto Sans CJK JP", sans-serif; }
.dlg-t { background: #1e2023; color: #e8e8e8; display: flex; align-items: center; flex: none; }
.dlg-b { flex: 1; display: flex; flex-direction: column; align-items: center; }
.msg { display: flex; align-items: center; }
.msg svg { flex: none; }
.msg p { margin: 0; white-space: nowrap; }
.palt { font-feature-settings: "palt"; }
.remember { display: flex; align-items: center; }
.remember i { display: block; background: #fff; border: 1px solid #c4c4c4; box-sizing: border-box; border-radius: 1px; }
.btns { display: flex; }
.btns button { background: #fff; box-sizing: border-box; padding: 0; color: #444; border-radius: 2px; }
.yes { border: 1.5px solid #ffc414; }
.no { border: 1.5px solid #dcdcd8; }

.small { width: 267px; height: 133px; border: 1px solid #8a8a8a; border-width: 0 0 1px; }
.small .dlg-t { height: 20px; padding-left: 4px; gap: 6px; font-size: 7.6px; }
.small .dlg-b { padding-top: 23px; }
.small .msg { width: 100%; padding-left: 13px; box-sizing: border-box; gap: 7px; }
.small .msg svg { width: 20px; height: 20px; }
.small .msg p { font-size: 8.5px; line-height: 14px; }
.small .palt { letter-spacing: -.5px; }
.small .remember { margin-top: 15px; gap: 4px; font-size: 7px; height: 11px; }
.small .remember i { width: 11px; height: 11px; }
.small .btns { margin-top: 10px; gap: 17px; }
.small .btns button { width: 50px; height: 17px; font-size: 7.5px; }

.pointer { position: absolute; left: 602px; top: 295px; }
.big { position: absolute; left: 623px; top: 194px; width: 442px; height: 224px; border: 5px solid #ff7a12; border-top-width: 4px; border-right-width: 4px; }
.big .dlg-t { height: 33px; padding-left: 6px; gap: 11px; font-size: 11.4px; }
.big .dlg-b { padding-top: 35px; }
.big .msg { width: 100%; padding-left: 22px; box-sizing: border-box; gap: 12px; }
.big .msg svg { width: 31px; height: 31px; }
.big .msg p { font-size: 13.85px; line-height: 22px; }
.big .palt { letter-spacing: -.9px; }
.big .remember { margin-top: 24px; gap: 6px; font-size: 11.3px; height: 17px; margin-left: 1px; }
.big .remember i { width: 17px; height: 17px; }
.big .btns { margin-top: 17px; gap: 26px; }
.big .btns button { width: 81px; height: 26px; font-size: 11.5px; }
</style>
